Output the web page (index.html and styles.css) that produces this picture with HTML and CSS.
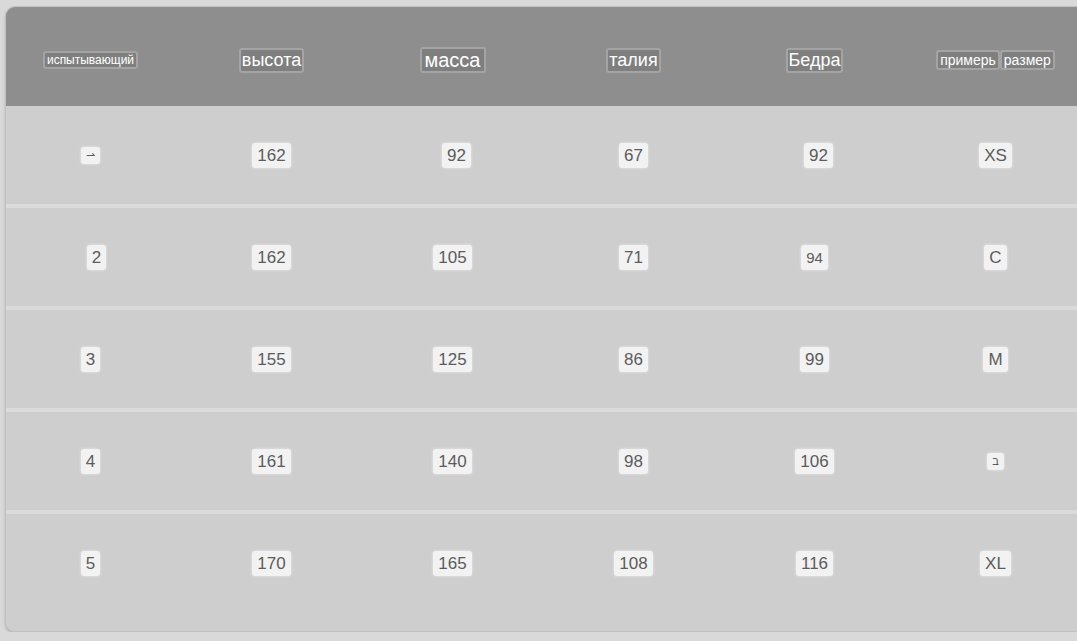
FILE: index.html
```html
<!DOCTYPE html>
<html lang="ru">
<head>
<meta charset="utf-8">
<title>Таблица размеров</title>
<link rel="stylesheet" href="styles.css">
</head>
<body>
<div class="card">
  <div class="row head">
    <div class="cell first"><span class="lbl xs">испытывающий</span></div>
    <div class="cell"><span class="lbl md">высота</span></div>
    <div class="cell"><span class="lbl lg">масса</span></div>
    <div class="cell"><span class="lbl md">талия</span></div>
    <div class="cell"><span class="lbl md">Бедра</span></div>
    <div class="cell"><span class="lbl sm">примерь</span><span class="lbl sm">размер</span></div>
  </div>
  <div class="row">
    <div class="cell first"><span class="val tiny">⇀</span></div>
    <div class="cell"><span class="val">162</span></div>
    <div class="cell shift"><span class="val">92</span></div>
    <div class="cell"><span class="val">67</span></div>
    <div class="cell shift"><span class="val">92</span></div>
    <div class="cell"><span class="val">XS</span></div>
  </div>
  <div class="sep"></div>
  <div class="row">
    <div class="cell first shift"><span class="val">2</span></div>
    <div class="cell"><span class="val">162</span></div>
    <div class="cell"><span class="val">105</span></div>
    <div class="cell"><span class="val">71</span></div>
    <div class="cell"><span class="val small">94</span></div>
    <div class="cell"><span class="val">C</span></div>
  </div>
  <div class="sep"></div>
  <div class="row">
    <div class="cell first"><span class="val">3</span></div>
    <div class="cell"><span class="val">155</span></div>
    <div class="cell"><span class="val">125</span></div>
    <div class="cell"><span class="val">86</span></div>
    <div class="cell"><span class="val">99</span></div>
    <div class="cell"><span class="val">M</span></div>
  </div>
  <div class="sep"></div>
  <div class="row">
    <div class="cell first"><span class="val">4</span></div>
    <div class="cell"><span class="val">161</span></div>
    <div class="cell"><span class="val">140</span></div>
    <div class="cell"><span class="val">98</span></div>
    <div class="cell"><span class="val">106</span></div>
    <div class="cell"><span class="val tiny">ב</span></div>
  </div>
  <div class="sep"></div>
  <div class="row">
    <div class="cell first"><span class="val">5</span></div>
    <div class="cell"><span class="val">170</span></div>
    <div class="cell"><span class="val">165</span></div>
    <div class="cell"><span class="val">108</span></div>
    <div class="cell"><span class="val">116</span></div>
    <div class="cell"><span class="val">XL</span></div>
  </div>
</div>
</body>
</html>
```
FILE: styles.css
```css
html, body {
  margin: 0;
  padding: 0;
  background: #d9d9d9;
  overflow: hidden;
  font-family: "Liberation Sans", Arial, sans-serif;
}
.card {
  margin: 6px 0 0 5px;
  width: 1120px;
  background: #cecece;
  border: 1px solid #c2c2c2;
  border-radius: 10px;
  overflow: hidden;
  padding-bottom: 19px;
  box-shadow: 0 2px 3px rgba(0, 0, 0, 0.18);
}
.row {
  display: grid;
  grid-template-columns: 175px repeat(5, 181px);
  height: 98px;
}
.row.head {
  height: 99px;
  background: #8e8e8e;
}
.cell {
  display: flex;
  align-items: center;
  justify-content: center;
}
.cell.first {
  padding-right: 6px;
}
.cell.shift {
  padding-left: 8px;
}
.cell.first.shift {
  padding-right: 0;
  padding-left: 6px;
}
.head .cell {
  padding-top: 7px;
}
.sep {
  height: 4px;
  background: #dbdbdb;
}
.lbl {
  display: inline-block;
  background: #7f7f7f;
  border: 2px solid #a4a4a4;
  border-radius: 3px;
  color: #ffffff;
  line-height: 1;
}
.lbl.xs {
  font-size: 12px;
  padding: 1px 2px;
}
.lbl.sm {
  font-size: 14px;
  padding: 1px 2px;
}
.lbl.md {
  font-size: 18px;
  padding: 1px 1px 2px;
}
.lbl.lg {
  font-size: 20px;
  padding: 1px 3px 1px;
}
.val {
  display: inline-block;
  background: #f2f2f2;
  border-radius: 3px;
  color: #5c5c5c;
  font-size: 17px;
  line-height: 19px;
  padding: 3px 5px;
  box-shadow: 0 0 3px rgba(255, 255, 255, 0.6);
}
.val.small {
  font-size: 15px;
}
.val.tiny {
  font-size: 11px;
  line-height: 13px;
  padding: 2px 5px;
}
```
